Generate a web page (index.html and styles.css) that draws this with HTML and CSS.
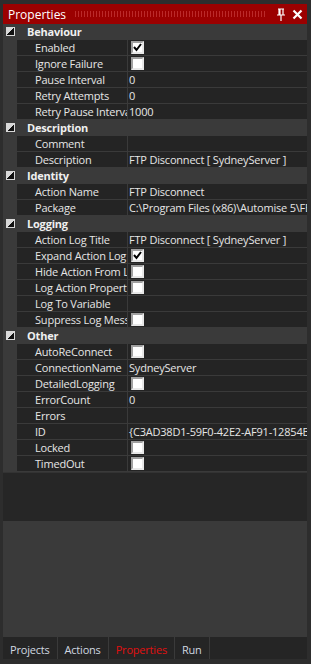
FILE: index.html
```html
<!DOCTYPE html>
<html lang="en">
<head>
    <meta charset="UTF-8">
    <title>Properties</title>
    <link rel="stylesheet" href="styles.css">
</head>
<body>
    <div class="window">

        <header class="titlebar">
            <span class="title">Properties</span>
            <span class="grip"></span>
            <svg class="pin" width="10" height="13" viewBox="0 0 10 13">
                <path d="M2 1h6M3 1v6M7 1v6M1 7h8M5 7v6M4 1v6" stroke="#fff" stroke-width="1.2" fill="none"/>
            </svg>
            <svg class="close" width="11" height="11" viewBox="0 0 11 11">
                <path d="M1.5 1.5l8 8M9.5 1.5l-8 8" stroke="#fff" stroke-width="2.2"/>
            </svg>
        </header>

        <section class="grid">
            <div class="cat"><i class="tog"></i>Behaviour</div>
            <div class="row"><span class="name">Enabled</span><span class="val"><b class="box on"></b></span></div>
            <div class="row"><span class="name">Ignore Failure</span><span class="val"><b class="box"></b></span></div>
            <div class="row"><span class="name">Pause Interval</span><span class="val">0</span></div>
            <div class="row"><span class="name">Retry Attempts</span><span class="val">0</span></div>
            <div class="row"><span class="name">Retry Pause Interval</span><span class="val">1000</span></div>

            <div class="cat"><i class="tog"></i>Description</div>
            <div class="row"><span class="name">Comment</span><span class="val"></span></div>
            <div class="row"><span class="name">Description</span><span class="val">FTP Disconnect [ SydneyServer ]</span></div>

            <div class="cat"><i class="tog"></i>Identity</div>
            <div class="row"><span class="name">Action Name</span><span class="val">FTP Disconnect</span></div>
            <div class="row"><span class="name">Package</span><span class="val">C:\Program Files (x86)\Automise 5\FEATURES\FTP</span></div>

            <div class="cat"><i class="tog"></i>Logging</div>
            <div class="row"><span class="name">Action Log Title</span><span class="val">FTP Disconnect [ SydneyServer ]</span></div>
            <div class="row"><span class="name">Expand Action Log</span><span class="val"><b class="box on"></b></span></div>
            <div class="row"><span class="name">Hide Action From Log</span><span class="val"><b class="box"></b></span></div>
            <div class="row"><span class="name">Log Action Properties</span><span class="val"><b class="box"></b></span></div>
            <div class="row"><span class="name">Log To Variable</span><span class="val"></span></div>
            <div class="row"><span class="name">Suppress Log Messages</span><span class="val"><b class="box"></b></span></div>

            <div class="cat"><i class="tog"></i>Other</div>
            <div class="row"><span class="name">AutoReConnect</span><span class="val"><b class="box"></b></span></div>
            <div class="row"><span class="name">ConnectionName</span><span class="val">SydneyServer</span></div>
            <div class="row"><span class="name">DetailedLogging</span><span class="val"><b class="box"></b></span></div>
            <div class="row"><span class="name">ErrorCount</span><span class="val">0</span></div>
            <div class="row"><span class="name">Errors</span><span class="val"></span></div>
            <div class="row"><span class="name">ID</span><span class="val">{C3AD38D1-59F0-42E2-AF91-12854B0E2C11}</span></div>
            <div class="row"><span class="name">Locked</span><span class="val"><b class="box"></b></span></div>
            <div class="row"><span class="name">TimedOut</span><span class="val"><b class="box"></b></span></div>
        </section>

        <div class="blank"></div>
        <div class="help"></div>

        <nav class="tabs">
            <span class="tab">Projects</span>
            <span class="tab">Actions</span>
            <span class="tab active">Properties</span>
            <span class="tab">Run</span>
        </nav>

    </div>
</body>
</html>
```

FILE: styles.css
```css
* {
    box-sizing: border-box;
    margin: 0;
    padding: 0;
}

body {
    width: 311px;
    height: 664px;
    overflow: hidden;
    background-color: #2d2d2d;
    font-family: 'Open Sans', 'Noto Sans', sans-serif;
    font-size: 11px;
    letter-spacing: -0.2px;
    color: #e6e6e6;
}

.window {
    height: 664px;
    display: flex;
    flex-direction: column;
    padding: 4px 4px 5px 3px;
}

.titlebar {
    height: 20px;
    flex: none;
    display: flex;
    align-items: center;
    padding: 0 4px 0 5px;
    background-color: #9b0000;
    color: #fff;
}

.title {
    font-size: 12px;
    letter-spacing: 0;
}

.grip {
    flex: 1;
    height: 6px;
    margin: 0 9px 0 8px;
    background-image: radial-gradient(circle, #bb2a2a 0.6px, transparent 0.8px);
    background-size: 3px 2px;
}

.pin {
    margin-right: 6px;
}

.grid {
    flex: none;
    display: flex;
    flex-direction: column;
    background-color: #242424;
}

.cat {
    height: 16px;
    display: flex;
    align-items: center;
    background-color: #3a3a3a;
    border-bottom: 1px solid #3a3a3a;
    font-weight: bold;
    color: #f0f0f0;
}

.tog {
    width: 9px;
    height: 9px;
    margin: 0 12px 0 3px;
    background: linear-gradient(135deg, #d8d8d8 50%, #111 50%);
    border: 1px solid #d8d8d8;
}

.row {
    height: 16px;
    display: flex;
    background-color: #3a3a3a;
}

.name {
    width: 111px;
    margin-left: 14px;
    padding-left: 18px;
    background-color: #242424;
    border-bottom: 1px solid #3a3a3a;
    border-right: 1px solid #3a3a3a;
    white-space: nowrap;
    overflow: hidden;
    line-height: 15px;
}

.val {
    flex: 1;
    padding-left: 1px;
    background-color: #242424;
    border-bottom: 1px solid #3a3a3a;
    white-space: nowrap;
    overflow: hidden;
    line-height: 15px;
}

.box {
    display: block;
    width: 13px;
    height: 13px;
    margin: 1px 0 0 2px;
    background-color: #fff;
    border: 2px solid;
    border-color: #a0a0a0 #e8e8e8 #e8e8e8 #a0a0a0;
}

.box.on {
    background: #fff url("data:image/svg+xml,%3Csvg xmlns='http://www.w3.org/2000/svg' width='9' height='9'%3E%3Cpath d='M1 4l2.5 3L8 1' stroke='%23000' stroke-width='2' fill='none'/%3E%3C/svg%3E") no-repeat center;
}

.blank {
    height: 49px;
    flex: none;
    background-color: #262626;
    border-top: 1px solid #333;
}

.help {
    flex: 1;
    background-color: #3a3a3a;
}

.tabs {
    height: 22px;
    flex: none;
    display: flex;
    background-color: #252525;
    font-size: 11px;
}

.tab {
    padding: 5px 7px 0 7px;
    border-right: 1px solid #3a3a3a;
    color: #d0d8e0;
}

.tab.active {
    color: #e01010;
}
```
